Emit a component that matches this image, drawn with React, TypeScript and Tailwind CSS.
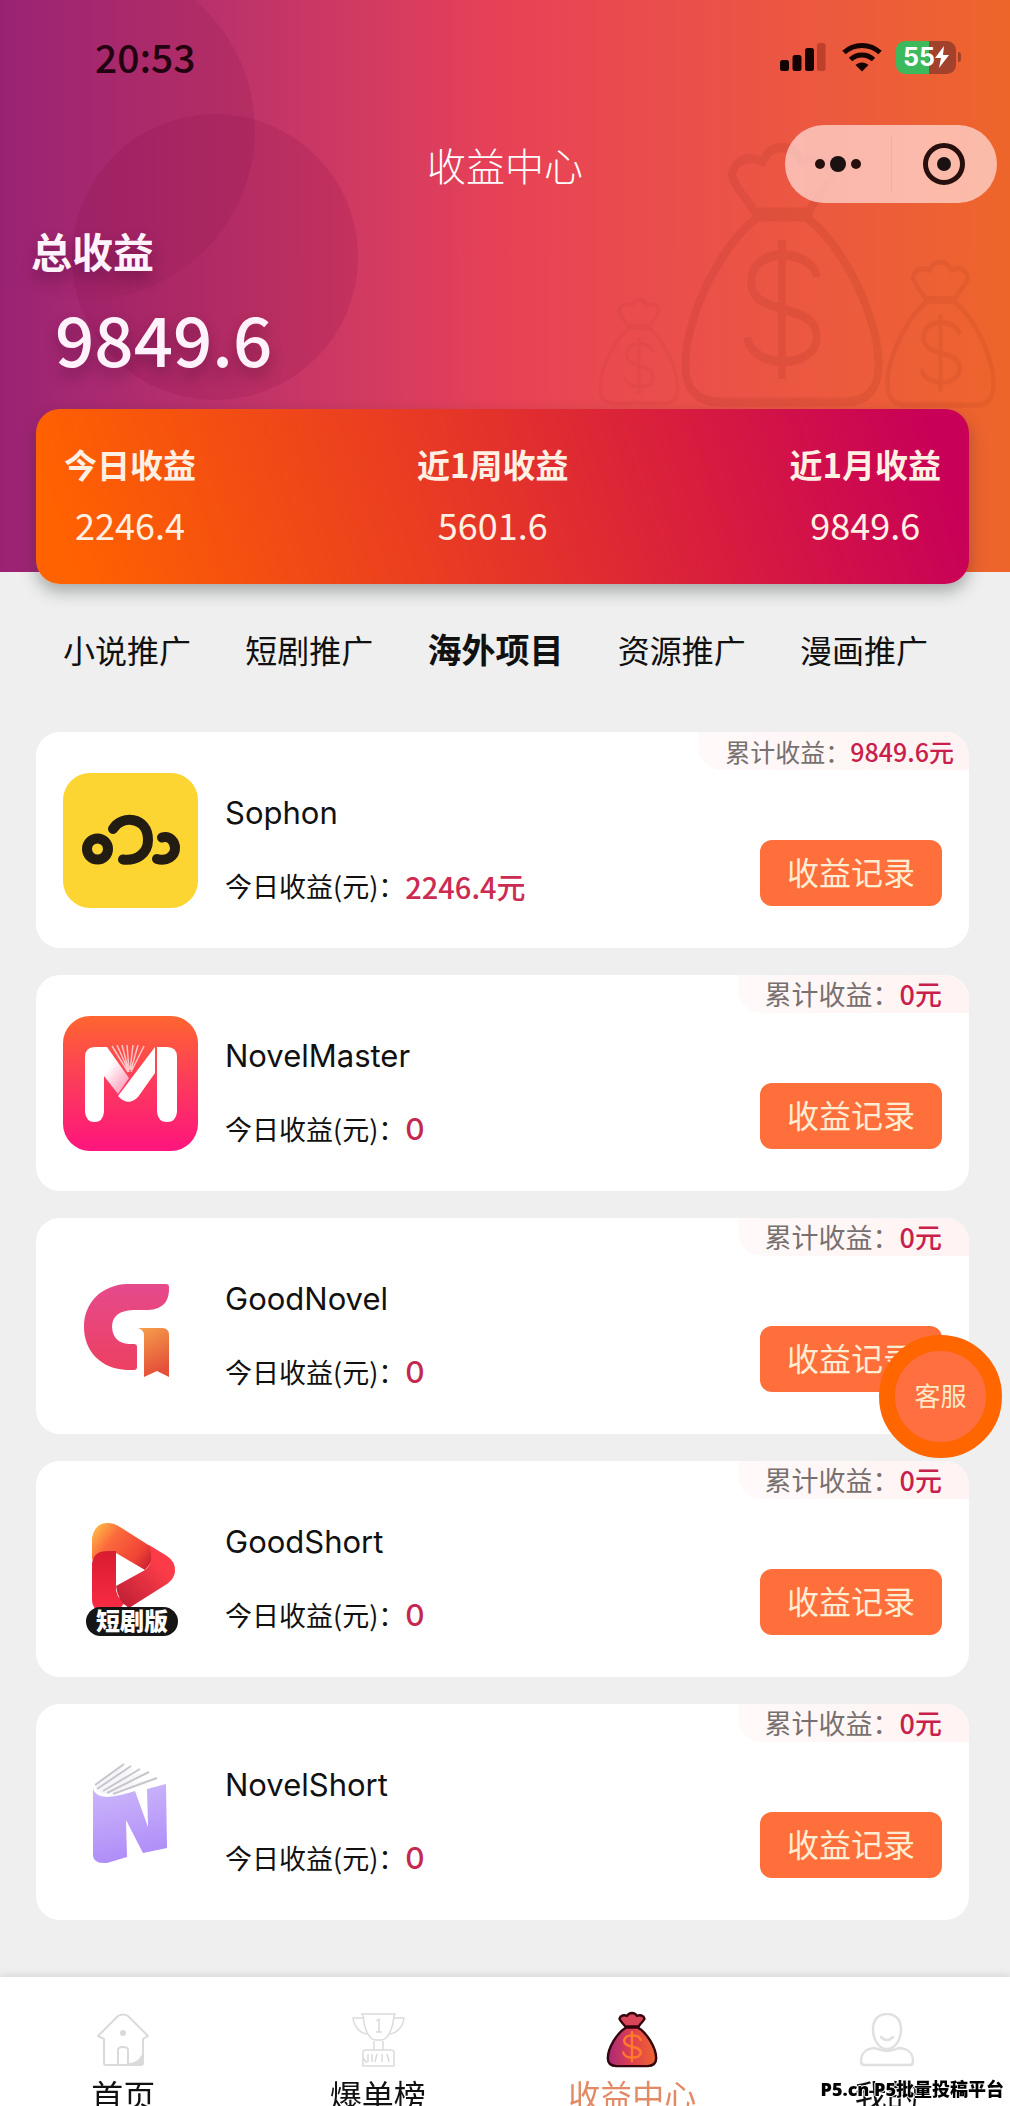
import type { ReactNode } from "react";

const BAG_BODY = "M23 17 C14 22 4 38 4 49 Q4 57 13 57 H45 Q54 57 54 49 C54 38 44 22 35 17 Z";
const BAG_TOP = "M22 16 C19 12 17 11 16 8 C17 4 21 4 24 5 C26 1 32 1 34 5 C37 4 41 4 42 8 C41 11 38 12 36 16 Z";
const DOLLAR = "M38 30 C37 24 21 23 21 31 C21 39 38 35 38 43 C38 50 21 50 20 43 M29 22 V52";

function FaintBag({ className }: { className: string }) {
  return (
    <svg className={className} viewBox="0 0 58 60" preserveAspectRatio="none" fill="none" stroke="#7c1d10" strokeWidth="2" aria-hidden="true">
      <path d={BAG_BODY} />
      <path d={BAG_TOP} />
      <path d={DOLLAR} />
    </svg>
  );
}

function StatusIcons() {
  return (
    <div className="flex items-center">
      <svg className="mr-4 h-[30px] w-[46px]" viewBox="0 0 46 30" fill="#160404" aria-hidden="true">
        <rect x="0" y="18" width="9" height="11" rx="2.5" />
        <rect x="12.500" y="13" width="9" height="16" rx="2.500" />
        <rect x="25" y="6" width="9" height="23" rx="2.500" />
        <rect x="37" y="1" width="8.500" height="28" rx="2.500" fill="#7a1c10" opacity=".4" />
      </svg>
      <svg className="mr-3.5 h-[30px] w-10" viewBox="0 0 40 30" fill="none" stroke="#160404" strokeWidth="5" aria-hidden="true">
        <path d="M2 10.500 C12 1 28 1 38 10.500" />
        <path d="M8.500 17.500 C15 11.500 25 11.500 31.500 17.500" />
        <path d="M13.500 23 C17 19.500 23 19.500 26.500 23 L20 29.500 Z" fill="#160404" stroke="none" />
      </svg>
      <div className="flex h-[33px] w-[60px] items-center justify-center rounded-[9px] bg-linear-to-r from-[#3cb95c] from-55% to-[#a3422c] to-55%">
        <span className="font-[Inter] text-[25px] leading-none font-bold text-white">55</span>
        <svg className="h-[22px] w-3.5" viewBox="0 0 14 22" fill="white" aria-hidden="true">
          <path d="M9 0 L0 12 H6 L4 22 L14 9 H8 Z" />
        </svg>
      </div>
      <span className="ml-0.5 h-2.5 w-[3px] rounded-r-full bg-[#a3422c]" />
    </div>
  );
}

function SophonLogo() {
  return (
    <svg viewBox="0 0 135 135" className="size-full" aria-hidden="true">
      <rect width="135" height="135" rx="27" fill="#fdd532" />
      <g fill="none" stroke="#231c12" strokeWidth="10" strokeLinecap="round">
        <circle cx="34.500" cy="76" r="10.500" />
        <path d="M50 56 C58 42 85 43 85 67 C85 81 73 88 60 86.500" />
        <path d="M99 64.500 C107 62 112 69 112 75 C112 83 104 89 94 86" />
      </g>
    </svg>
  );
}

function NovelMasterLogo() {
  return (
    <svg viewBox="0 0 135 135" className="size-full" aria-hidden="true">
      <defs>
        <linearGradient id="nm-bg" x1="0" y1="0" x2="0" y2="1">
          <stop offset="0" stopColor="#ff6530" />
          <stop offset=".5" stopColor="#fb3a5c" />
          <stop offset="1" stopColor="#ff157e" />
        </linearGradient>
        <linearGradient id="nm-fold" x1="0" y1="0" x2="1" y2="1">
          <stop offset=".45" stopColor="#fff" />
          <stop offset="1" stopColor="#ff86ab" />
        </linearGradient>
      </defs>
      <rect width="135" height="135" rx="27" fill="url(#nm-bg)" />
      <path d="M49 30 L65 56 M54 29 L66 56 M59 29 L66 56 M64 29 L66 54 M70 29 L67 54 M75 29 L68 54 M81 30 L68 56" stroke="#ffc4c4" strokeWidth="1.500" fill="none" />
      <path d="M28 33 Q30 31 34 31 H44 L66 62 L55 78 L41 60 Z" fill="url(#nm-fold)" />
      <path d="M22 41 Q22 31 32 31 Q41 33 41 44 V96 Q40 106 31.500 106 Q23 106 22 96 Z" fill="#fff" />
      <path d="M92 31 V57 L75 81 Q65 91 55 80 Z" fill="#fff" />
      <path d="M94 31 H104 Q114 31 114 41 V96 Q113 106 104 106 Q95 106 94 96 Z" fill="#fff" />
    </svg>
  );
}

function GoodNovelLogo() {
  return (
    <svg viewBox="0 0 135 135" className="size-full" aria-hidden="true">
      <defs>
        <linearGradient id="gn-g" x1="0" y1="0" x2="0" y2="1">
          <stop offset="0" stopColor="#e64a8c" />
          <stop offset="1" stopColor="#ec4062" />
        </linearGradient>
        <linearGradient id="gn-tag" x1="0" y1="0" x2=".3" y2="1">
          <stop offset="0" stopColor="#f5a04a" />
          <stop offset="1" stopColor="#e4503a" />
        </linearGradient>
      </defs>
      <path d="M64 25 H103 Q106 25 106 28 Q107 50 85 51 H70 Q49 52 49 68 Q50 84 66 85 H71 Q74 85 74 88 V108 Q74 111 71 111 H64 C38 110 21 92 21 68 C21 43 39 26 64 25 Z" fill="url(#gn-g)" />
      <path d="M75 69 H99 Q106 69 106 76 V118 L94 112 L81 118 V76 Q81 71 75 69 Z" fill="url(#gn-tag)" />
    </svg>
  );
}

function GoodShortLogo() {
  return (
    <svg viewBox="0 0 135 135" className="size-full" aria-hidden="true">
      <defs>
        <linearGradient id="gs-top" x1="0" y1=".2" x2="1" y2=".8">
          <stop offset="0" stopColor="#ffb545" />
          <stop offset=".3" stopColor="#fb6a3c" />
          <stop offset=".75" stopColor="#f04436" />
          <stop offset="1" stopColor="#c92030" />
        </linearGradient>
        <linearGradient id="gs-left" x1="0" y1="0" x2="0" y2="1">
          <stop offset="0" stopColor="#d81c30" />
          <stop offset="1" stopColor="#fa2c44" />
        </linearGradient>
        <linearGradient id="gs-right" x1="1" y1="0" x2="0" y2="1">
          <stop offset=".3" stopColor="#fb3c48" />
          <stop offset="1" stopColor="#b81c34" />
        </linearGradient>
      </defs>
      <path d="M29 58 V36 Q32 20 46 21 Q51 21 57 25 L87 44 Q95 51 86 63 L82 68 L53 51 Q40 46 29 58 Z" fill="url(#gs-top)" />
      <path d="M29 62 Q30 49 45 49 H53 V84 Q52 95 62 100 L56 108 H38 Q29 108 29 98 Z" fill="url(#gs-left)" />
      <path d="M86 43 L104 54 Q113 60 112 70 Q111 77 104 82 L66 106 Q55 100 53 84 L82 68 Q92 60 86 43 Z" fill="url(#gs-right)" />
      <rect x="23" y="105" width="92" height="29" rx="14.500" fill="#151515" />
      <text x="69" y="128" textAnchor="middle" fontSize="24" fontWeight="900" fill="#fff" fontFamily="'Noto Sans CJK SC', sans-serif">
        短剧版
      </text>
    </svg>
  );
}

function NovelShortLogo() {
  return (
    <svg viewBox="0 0 135 135" className="size-full" aria-hidden="true">
      <defs>
        <linearGradient id="ns-n" x1="0" y1="0" x2=".2" y2="1">
          <stop offset="0" stopColor="#cdb9fb" />
          <stop offset="1" stopColor="#b08df8" />
        </linearGradient>
      </defs>
      <path d="M32 40 L59 20 L63 19 L56 27 L71 23 L60 34 L80 27 L68 38 L93 33 L50 48 L38 49 Z" fill="#f6f5f8" />
      <path d="M32 40 L61 19 M34 44 L68 21 M40 46 L77 24 M44 48 L86 27 M50 49 L94 33" stroke="#c8c5ce" strokeWidth="2" fill="none" />
      <path d="M30 44 Q32 51 44 52 Q57 51 72 46 L85 82 L84 44 L103 39 L104 103 L80 108 L63 75 L64 112 L44 118 Q31 119 30 111 Z" fill="url(#ns-n)" />
    </svg>
  );
}

type Project = { name: string; today: string; total: string; compact?: boolean; logo: ReactNode };

const projects: Project[] = [
  { name: "Sophon", today: "2246.4元", total: "9849.6元", compact: true, logo: <SophonLogo /> },
  { name: "NovelMaster", today: "0", total: "0元", logo: <NovelMasterLogo /> },
  { name: "GoodNovel", today: "0", total: "0元", logo: <GoodNovelLogo /> },
  { name: "GoodShort", today: "0", total: "0元", logo: <GoodShortLogo /> },
  { name: "NovelShort", today: "0", total: "0元", logo: <NovelShortLogo /> },
];

function ProjectCard({ project }: { project: Project }) {
  return (
    <li className="relative flex items-start gap-[27px] rounded-[24px] bg-white px-[27px] pt-[41px] pb-10">
      <div
        className={
          project.compact
            ? "absolute top-0 right-0 rounded-tr-[24px] rounded-bl-[24px] bg-linear-to-r from-[#fff9f9] to-[#fff3f3] pr-[15px] pl-[27px] text-[25px] leading-[38px] text-[#77706f]"
            : "absolute top-0 right-0 rounded-tr-[24px] rounded-bl-[24px] bg-linear-to-r from-[#fff9f9] to-[#fff3f3] px-[27px] text-[27px] leading-[38px] text-[#77706f]"
        }
      >
        累计收益：<span className="font-medium text-[#c81f4c]">{project.total}</span>
      </div>
      <div className="size-[135px] shrink-0">{project.logo}</div>
      <div className="min-w-0 flex-1 pt-[18px]">
        <h2 className="font-[Inter] text-[31px] leading-[44px] font-normal text-[#111]">{project.name}</h2>
        <p className="mt-[31px] flex items-center text-[27px] leading-10 text-[#111]">
          今日收益(元)：
          <span
            className={
              project.compact
                ? "text-[29px] font-medium text-[#cc2b52]"
                : "font-[Inter] text-[30px] font-medium text-[#c42850]"
            }
          >
            {project.today}
          </span>
        </p>
      </div>
      <button type="button" className="mb-0.5 h-[66px] w-[182px] shrink-0 self-end rounded-xl bg-[#ff6f3b] pb-1 text-[32px] leading-none text-[#ffedd3]">
        收益记录
      </button>
    </li>
  );
}

const stats = [
  { label: "今日收益", value: "2246.4" },
  { label: "近1周收益", value: "5601.6" },
  { label: "近1月收益", value: "9849.6" },
];

const tabs = ["小说推广", "短剧推广", "海外项目", "资源推广", "漫画推广"];

const navItems: { label: string; active?: boolean; icon: ReactNode }[] = [
  {
    label: "首页",
    icon: (
      <svg viewBox="0 0 54 54" className="size-[54px]" fill="none" stroke="#dadada" strokeWidth="2" strokeLinejoin="round" aria-hidden="true">
        <path d="M22 3 Q27 0 32 3 L52 23 L47 26 V50 Q47 52 45 52 H10 Q8 52 8 50 V26 L2 23 Z" />
        <circle cx="27" cy="20" r="2" fill="#dadada" />
        <path d="M22 52 V37 Q22 34 27 34 Q32 34 32 37 V52" />
        <path d="M33 51 Q42 51 46 43 V51 Z" fill="#dadada" />
      </svg>
    ),
  },
  {
    label: "爆单榜",
    icon: (
      <svg viewBox="0 0 54 54" className="size-[54px]" fill="none" stroke="#dadada" strokeWidth="1.500" strokeLinejoin="round" aria-hidden="true">
        <path d="M10 1 H45 M12 2 C13 16 18 27 25 27 H30 C37 27 42 16 43 2" />
        <path d="M12 5 H2 C3 14 9 20 16 21 M43 5 H53 C52 14 46 20 39 21" />
        <path d="M25 8 L28 6 V19 M25 19 H31 M23 28 V37 M32 28 V37" />
        <path d="M15 37 H40 Q44 37 43 42 V53 H12 V42 Q11 37 15 37 Z M17 41 V49 M21 41 V49 M26 41 L24 49 M31 41 V49 M36 41 L38 49 M12 45 L16 50" />
      </svg>
    ),
  },
  {
    label: "收益中心",
    active: true,
    icon: (
      <svg viewBox="0 0 58 60" className="h-[58px] w-[60px]" strokeLinejoin="round" aria-hidden="true">
        <defs>
          <linearGradient id="bag-fill" x1="0" y1="0" x2="1" y2="0">
            <stop offset="0" stopColor="#a82a78" />
            <stop offset=".5" stopColor="#e04050" />
            <stop offset="1" stopColor="#ee6630" />
          </linearGradient>
        </defs>
        <path d={BAG_BODY} fill="url(#bag-fill)" stroke="#35050d" strokeWidth="2.500" />
        <path d={BAG_TOP} fill="#d84458" stroke="#35050d" strokeWidth="2.500" />
        <path d={DOLLAR} fill="none" stroke="#ff7a2a" strokeWidth="2.500" strokeLinecap="round" />
      </svg>
    ),
  },
  {
    label: "我的",
    icon: (
      <svg viewBox="0 0 54 54" className="size-[54px]" fill="none" stroke="#e0e0e0" strokeWidth="2.500" strokeLinecap="round" aria-hidden="true">
        <path d="M27 1 C36 1 41 7 41 16 C41 27 35 36 27 36 C19 36 13 27 13 16 C13 7 18 1 27 1 Z" />
        <path d="M21 24 Q27 30 33 24" />
        <path d="M14 35 C5 36 1 40 1 49 Q1 52 5 52 H49 Q53 52 53 49 C53 40 49 36 40 35 C37 35 35 38 27 38 C19 38 17 35 14 35 Z" />
      </svg>
    ),
  },
];

export default function App() {
  return (
    <div className="min-h-screen bg-[#efefef] pb-[129px] font-['Noto_Sans_CJK_SC',sans-serif]">
      <header className="relative bg-linear-to-r from-[#9a2274] via-[#e84156] to-[#ee652a] pr-[41px] pl-9">
        <div className="pointer-events-none absolute inset-0 overflow-hidden">
          <div className="absolute -top-10 -left-[85px] size-[340px] rounded-full bg-linear-to-r from-transparent from-25% to-[#700840]/14" />
          <div className="absolute top-[114px] left-[72px] size-[286px] rounded-full bg-[#800840]/15" />
          <FaintBag className="absolute top-[296px] right-[326px] h-[113px] w-[90px] opacity-5" />
          <FaintBag className="absolute top-[138px] right-[116px] h-[278px] w-[224px] opacity-10" />
          <FaintBag className="absolute top-[257px] right-[8px] h-[156px] w-[123px] opacity-8" />
        </div>
        <div className="relative flex h-20 items-end justify-between pr-2 pl-[59px]">
          <time className="text-[39px] leading-[48px] font-medium text-[#22020f]">20:53</time>
          <div className="flex h-[46px] items-center">
            <StatusIcons />
          </div>
        </div>
        <div className="relative -mr-7 -ml-[23px] mt-[45px] grid grid-cols-[1fr_auto_1fr] items-center">
          <h1 className="col-start-2 text-[39px] leading-none font-light text-white">收益中心</h1>
          <div className="flex h-[78px] w-[212px] items-center justify-self-end rounded-full bg-[#ffd8d2]/75">
            <button type="button" aria-label="更多" className="flex flex-1 items-center justify-center gap-[5px] border-r border-black/5 py-5">
              <span className="size-2.5 rounded-full bg-[#25100e]" />
              <span className="size-4 rounded-full bg-[#1a1212]" />
              <span className="size-2.5 rounded-full bg-[#25100e]" />
            </button>
            <button type="button" aria-label="关闭" className="flex flex-1 items-center justify-center">
              <span className="flex size-[42px] items-center justify-center rounded-full border-[5px] border-[#260f0c]">
                <span className="size-3.5 rounded-full bg-[#1a1212]" />
              </span>
            </button>
          </div>
        </div>
        <div className="relative mt-[19px] text-[#fff2fb] [text-shadow:0_8px_14px_rgba(50,0,40,0.35)]">
          <p className="-ml-[5px] text-[41px] leading-[56px] font-bold">总收益</p>
          <p className="mt-[17px] ml-[19px] text-[69px] leading-[84px] font-medium">9849.6</p>
        </div>
        <dl className="relative top-3 mt-[18px] flex justify-between rounded-[24px] bg-[linear-gradient(72deg,#ff6200_4%,#e3312c_52%,#c80058_96%)] px-7 pt-[26px] pb-[29px] text-center text-[#fff0e4] shadow-[0_8px_16px_rgba(40,50,50,0.35)]">
          {stats.map((s) => (
            <div key={s.label}>
              <dt className="text-[33px] leading-[58px] font-bold">{s.label}</dt>
              <dd className="text-[36px] leading-[62px]">{s.value}</dd>
            </div>
          ))}
        </dl>
      </header>

      <div role="tablist" className="mt-[50px] flex items-center justify-between pr-[82px] pl-[63px] text-[32px] leading-[54px] text-[#111]">
        {tabs.map((t) => (
          <button
            key={t}
            type="button"
            role="tab"
            aria-selected={t === "海外项目"}
            className={t === "海外项目" ? "text-[34px] font-bold" : ""}
          >
            {t}
          </button>
        ))}
      </div>

      <ul className="mt-14 mr-[41px] ml-9 flex flex-col gap-[27px]">
        {projects.map((p) => (
          <ProjectCard key={p.name} project={p} />
        ))}
      </ul>

      <button
        type="button"
        className="fixed right-2 bottom-[648px] z-10 size-[123px] rounded-full border-[16px] border-[#ff6600] bg-[#ff6f3f] pb-1 text-[26px] leading-none text-[#ffe9c8]"
      >
        客服
      </button>

      <nav className="fixed inset-x-0 bottom-0 h-[129px] overflow-hidden bg-white shadow-[0_-2px_8px_rgba(0,0,0,0.1)]">
        <div className="-mx-1 grid grid-cols-4">
          {navItems.map((n) => (
            <a key={n.label} href="#" className="flex flex-col items-center pt-9 text-[32px] leading-[48px] text-[#111]">
              <span className="flex h-[54px] items-center">{n.icon}</span>
              <span className={n.active ? "mt-[3px] text-[#e28a66]" : "mt-[3px]"}>{n.label}</span>
            </a>
          ))}
        </div>
      </nav>
      <p className="pointer-events-none fixed right-1.5 bottom-1 z-20 font-['Noto_Sans','Noto_Sans_CJK_SC',sans-serif] text-[18px] leading-[26px] font-black text-black [text-shadow:1px_0_#fff,-1px_0_#fff,0_1px_#fff,0_-1px_#fff]">
        P5.cn P5批量投稿平台
      </p>
    </div>
  );
}
